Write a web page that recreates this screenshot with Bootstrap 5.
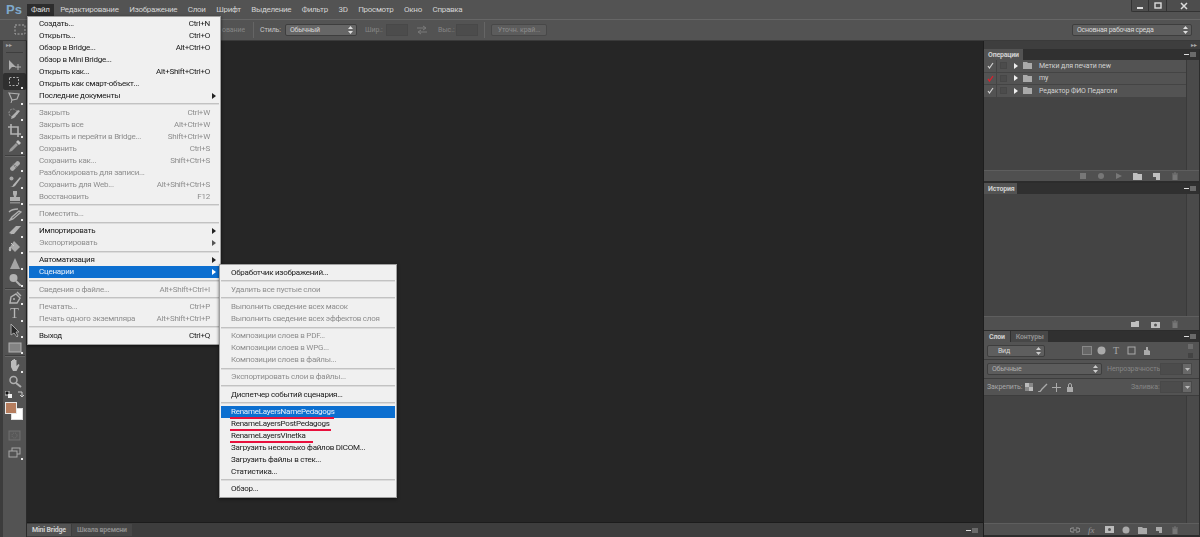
<!DOCTYPE html>
<html lang="ru">
<head>
<meta charset="utf-8">
<title>Photoshop</title>
<link href="https://cdn.jsdelivr.net/npm/bootstrap@5.3.0/dist/css/bootstrap.min.css" rel="stylesheet">
<style>
html,body{margin:0;height:537px;overflow:hidden;background:#262626}
.app{width:1200px;height:537px;font:7px/12px Roboto,"Liberation Sans",sans-serif;letter-spacing:-.1px;color:#c8c8c8;position:relative;overflow:hidden;filter:blur(.3px)}
.menubar{height:19px;background:#535353;flex:none}
.ps-logo{width:27px;padding-left:6px;font:bold 13px/19px "Liberation Sans",sans-serif;letter-spacing:0;color:#7fa9cc}
.mb-item{padding:0 4px;margin-right:2.6px;line-height:12px;height:12px;margin-top:4px;color:#d2d2d2;font-size:8px;letter-spacing:-.3px}
.mb-item.on{background:#2c2c2c;color:#ddd}
.winbtns{height:12px;width:69px;border:1px solid #333;border-top:0;border-right:0;border-radius:0 0 0 2px;background:#4d4d4d}
.winbtns span{border-right:1px solid #333;height:11px}
.optbar{height:22px;background:#535353;border-top:1px solid #666;border-bottom:1px solid #3a3a3a;flex:none;color:#c6c6c6;padding-left:14px}
.dim{color:#858585}
.vsep{width:1px;height:16px;background:#3d3d3d;border-right:1px solid #656565;flex:none}
.sel{height:12px;background:#666;border:1px solid #3e3e3e;border-radius:2px;color:#d8d8d8;padding:0 3px 0 4px;line-height:10px;letter-spacing:-.25px;flex:none}
.inp{width:22px;height:12px;background:#4c4c4c;border:1px solid #484848;flex:none}
.refine{width:56px;height:12px;background:#5c5c5c;border:1px solid #484848;border-radius:2px;line-height:10px;color:#8c8c8c;text-align:center;flex:none}
.tools{width:27px;flex:none;background:#535353;border-left:3px solid #3c3c3c;border-right:1px solid #2a2a2a;padding-top:0}
.tools-top{height:16px;width:23px;flex:none;color:#aaa;font-size:6px;line-height:8px;padding-left:3px}
.tools-top i{display:block;width:17px;height:1px;background:#3e3e3e;margin-top:3px}
.tool{height:16.35px;width:23px;flex:none;position:relative}
.tool svg{opacity:.82}
.tool.more::after{content:"";position:absolute;right:3px;bottom:1px;width:2px;height:2px;background:#e8e8e8}
.tool.on{background:#2f2f2f;border-radius:2px}
.tsep{height:2px;border-top:1px solid #3e3e3e;border-bottom:1px solid #666;width:20px;flex:none}
.colors{height:24px;width:23px;position:relative;flex:none}
.fgc,.bgc{position:absolute;border:1px solid #ddd}
.fgc{left:2px;top:2px;width:12px;height:12px;background:#b57d5e;z-index:1;border-color:#e8e8e8}
.bgc{left:8px;top:8px;width:12px;height:12px;background:#fff}
.center{min-width:0}
.canvas{background:#262626}
.strip{height:15px;background:#3d3d3d;border-top:1px solid #1c1c1c;padding:1px 3px 1px 0;flex:none}
.tabx{height:12px;line-height:12px;padding:0 5px;color:#8d8d8d;font-weight:bold;font-size:7px;letter-spacing:-.2px;background:#474747;margin-right:1px}
.tabx.on{background:#535353;color:#d0d0d0}
.ptab-a{height:11px;width:39px;padding:0 0 0 4px;color:#c8c8c8}
.ptab-b{height:11px;width:33px;padding:0 0 0 4px;color:#c8c8c8}
.ptab-c{height:11px;padding:0 5px}
.dock{width:217px;flex:none;background:#2c2c2c;border-left:1px solid #1e1e1e;padding:0 1px 2px 0}
.dock-top{height:8px;background:#3e3e3e;color:#aaa;font-size:6px;line-height:7px;text-align:right;padding-right:3px;margin-right:-1px;flex:none}
.ptabs{height:11px;background:#303030;flex:none;padding-right:1px}
.pbody{background:#444;min-height:0}
.pscroll{width:13px;background:#4a4a4a;border-left:1px solid #3a3a3a;flex:none}
.pfoot{height:11px;background:#505050;border-top:1px solid #5e5e5e;flex:none;padding-right:20px;gap:10px}
.pfoot.lay{height:12px;gap:8px}
.pfoot.his{height:14px;gap:11px}
.fxt{font:italic 9px/10px "Liberation Serif",serif;color:#999;width:9px;flex:none}
.act{height:12.5px;background:#535353;border-bottom:1px solid #444;color:#d2d2d2;line-height:12px;flex:none}
.act .chk{width:13px;border-right:1px solid #444;height:100%}
.act .chk svg{margin:0}
.act .bx{width:7px;height:7px;border:1px solid #474747;background:#4c4c4c;margin:0 5px 0 3px;flex:none}
.act .tri{width:0;height:0;border-left:4px solid #eee;border-top:3px solid transparent;border-bottom:3px solid transparent;margin:0 5px 0 2px;flex:none}
.act svg{margin-right:7px;flex:none}
.prow{background:#535353;border-bottom:1px solid #3d3d3d;flex:none;padding-left:3px;color:#a8a8a8}
.pmenu{width:14px;height:11px;flex:none}
.pmenu i{display:block;width:6px;height:5px;background:#6a6a6a;margin-left:1px}
.pmenu b{display:block;width:5px;height:1px;background:#ddd}
.fi{flex:none;display:block}
.sc i{display:block;width:5px;height:5px;background:#6c6c6c}
.sc i+i{background:#434343}
.tt{font:10px/10px "Liberation Serif",serif;width:10px;flex:none;text-align:center;letter-spacing:0}
.ps-menu{--bs-dropdown-padding-y:0;--bs-dropdown-border-radius:0;min-width:0;position:absolute;background:#f0f0f0;border:1px solid #a0a0a0;border-radius:0;padding:.5px 1px 2px;box-shadow:0 1px 3px rgba(0,0,0,.6);z-index:5}
.m-file{left:27px;top:16px;width:194px}
.m-scr{left:219px;top:264px;width:178px;padding-top:1.5px;z-index:6}
.ps-menu .dropdown-item{padding:0 9px 0 10px;height:12px;line-height:12px;font-size:8px;letter-spacing:-.25px;color:#181818;position:relative;background:none}
.ps-menu .dropdown-item.disabled{color:#8e8e8e}
.ps-menu .dropdown-item.active{background:#0c6fd0;color:#e8f0fa}
.ps-menu .dropdown-divider{margin:1.62px 0;height:2px;border-top:1px solid #c2c2c2;border-bottom:1px solid #dcdcdc;opacity:1;background:none}
.subtri{position:absolute;right:3px;top:3px;border-left:4px solid #222;border-top:3px solid transparent;border-bottom:3px solid transparent;width:0;height:0}
.subtri.dis{border-left-color:#555}
.active .subtri{border-left-color:#fff}
.redline{position:absolute;left:9px;bottom:-1.5px;height:2.5px;background:#e8103c;display:block}
.r1{width:104px}.r2{width:101px}.r3{width:83px}
svg{display:block}
.o1{margin-left:191px;width:27px;overflow:hidden;text-align:right;flex:none;white-space:nowrap}
.o2{margin-left:8px}
.o3{margin-left:6px;width:25px;flex:none}
.o4{width:72px}
.o5{margin-left:8px;width:21px;flex:none}
.o6{margin:0 11px 0 9px;flex:none}
.o7{width:18px;flex:none}
.o8{margin:0 6px}
.o9{width:120px;margin-right:8px;background:#5e5e5e}
.w17{width:17px}.w18{width:18px}
.l1{width:58px;background:#5e5e5e;padding-left:10px}
.l2{margin-left:37px;flex:none}
.l3{margin-left:4.5px;flex:none}
.l4{margin-left:5.5px}
.l5{margin-left:5.5px;flex:none}
.l6{margin-left:6px;flex:none}
.l7{margin-left:37.5px;flex:none}
.b1{width:115px;background:#5c5c5c;color:#b0b0b0}
.b2{margin-left:5px;width:53px;flex:none;white-space:nowrap}
.arrowb{width:10px;background:#686868}
.k1{width:38px;flex:none}
.k2{margin-left:5px;flex:none}
.k3{margin-left:3.5px;flex:none}
.k4{margin-left:5.5px;flex:none}
.k5{margin-left:57px;width:29px;flex:none}
.mt3{margin-top:3px}
.sw{width:19px;height:9px;margin-top:1px;flex:none}
.tsvc{font:14px/14px "Liberation Serif",serif;color:#b8b8b8;letter-spacing:0}
.h13{height:127px;flex:none}
.h110{height:110px;flex:none}
.mt-2p{margin-top:2px}
.mt-1p{margin-top:1px}
.h-18{height:18px}.h-19{height:19px}.h-17{height:17px}
</style>
</head>
<body>
<div class="app d-flex flex-column">
  <div class="menubar d-flex">
    <div class="ps-logo">Ps</div>
    <div class="mb-item on">Файл</div>
    <div class="mb-item">Редактирование</div>
    <div class="mb-item">Изображение</div>
    <div class="mb-item">Слои</div>
    <div class="mb-item">Шрифт</div>
    <div class="mb-item">Выделение</div>
    <div class="mb-item">Фильтр</div>
    <div class="mb-item">3D</div>
    <div class="mb-item">Просмотр</div>
    <div class="mb-item">Окно</div>
    <div class="mb-item">Справка</div>
    <div class="winbtns ms-auto d-flex">
      <span class="d-flex align-items-center justify-content-center w17"><svg width="8" height="8"><rect x="1" y="5" width="6" height="2" fill="#ddd"/></svg></span>
      <span class="d-flex align-items-center justify-content-center w18"><svg width="8" height="8"><rect x="1" y="1" width="6" height="5" fill="none" stroke="#ddd" stroke-width="1.4"/></svg></span>
      <span class="d-flex align-items-center justify-content-center flex-grow-1 border-0"><svg width="8" height="8"><path d="M1 1l6 6M7 1l-6 6" stroke="#ddd" stroke-width="1.5"/></svg></span>
    </div>
  </div>

  <div class="optbar d-flex align-items-center">
    <svg width="13" height="12" class="fi"><rect x="1" y="1" width="10" height="9" fill="none" stroke="#aaa" stroke-dasharray="2 1.5"/></svg>
    <span class="dim o1">ование</span>
    <div class="vsep o2"></div>
    <span class="o3">Стиль:</span>
    <div class="sel o4 d-flex justify-content-between align-items-center"><span>Обычный</span><svg width="5" height="8"><path d="M2.5 0L5 3H0zM2.5 8L5 5H0z" fill="#ddd"/></svg></div>
    <span class="dim o5">Шир.:</span>
    <div class="inp"></div>
    <svg width="10" height="10" class="o6"><path d="M0 3h8M6 1l3 2-3 2M10 7H2M4 5L1 7l3 2" fill="none" stroke="#7b7b7b"/></svg>
    <span class="dim o7">Выс.:</span>
    <div class="inp"></div>
    <div class="vsep o8"></div>
    <div class="refine">Уточн. край...</div>
    <div class="sel o9 d-flex justify-content-between align-items-center ms-auto"><span>Основная рабочая среда</span><svg width="5" height="8"><path d="M2.5 0L5 3H0zM2.5 8L5 5H0z" fill="#ddd"/></svg></div>
  </div>

  <div class="d-flex flex-grow-1 overflow-hidden">
    <div class="tools d-flex flex-column align-items-center position-relative">
      <div class="tools-top">▸▸<i></i></div>
      <div class="tool d-flex align-items-center justify-content-center"><svg width="15" height="13"><path d="M2 1v10l3-3 4 0z" fill="#c4c4c4"/><path d="M11 5v6M8 8h6" stroke="#c4c4c4"/></svg></div>
      <div class="tool more on d-flex align-items-center justify-content-center"><svg width="13" height="13"><rect x="1.5" y="2.5" width="9" height="8" fill="none" stroke="#c8c8c8" stroke-dasharray="2 1.5"/></svg></div>
      <div class="tool more d-flex align-items-center justify-content-center"><svg width="13" height="13"><path d="M1 2l10 1-2 5-5 1z" fill="none" stroke="#c4c4c4" stroke-width="1.2"/><path d="M4 9l-1 3" stroke="#c4c4c4"/></svg></div>
      <div class="tool more d-flex align-items-center justify-content-center"><svg width="13" height="13"><circle cx="5" cy="5" r="4" fill="none" stroke="#aaa" stroke-dasharray="2 1"/><path d="M3 11l3-1 6-7-2-1-6 6z" fill="#c8c8c8"/></svg></div>
      <div class="tool more d-flex align-items-center justify-content-center"><svg width="13" height="13"><path d="M3 0v10h10M0 3h10v10" fill="none" stroke="#c8c8c8" stroke-width="1.6"/></svg></div>
      <div class="tool more d-flex align-items-center justify-content-center"><svg width="13" height="13"><path d="M1 12l1-3 6-6 2 2-6 6z" fill="#aaa"/><path d="M8 2l2-2 3 3-2 2z" fill="#ddd"/></svg></div>
      <div class="tsep"></div>
      <div class="tool more d-flex align-items-center justify-content-center"><svg width="14" height="13"><path d="M2 9l7-7a3 3 0 0 1 3 3l-7 7a3 3 0 0 1-3-3z" fill="#c0c0c0"/><path d="M5 5l4 4" stroke="#777" stroke-width="2" stroke-dasharray="1 1"/></svg></div>
      <div class="tool more d-flex align-items-center justify-content-center"><svg width="14" height="13"><circle cx="3.5" cy="3.5" r="2" fill="#bbb"/><path d="M2 12c2 0 3-1 3-2l7-8 1 1-6 8c-1 1-3 1-5 1z" fill="#ccc"/></svg></div>
      <div class="tool more d-flex align-items-center justify-content-center"><svg width="14" height="13"><path d="M5 0h4v3L8 6h4v4H2V6h4L5 3z" fill="#c4c4c4"/><rect x="2" y="11" width="10" height="1.5" fill="#999"/></svg></div>
      <div class="tool more d-flex align-items-center justify-content-center"><svg width="14" height="13"><path d="M1 4c3-3 6-3 9-3M2 12l3-1 8-7-2-1-7 6z" fill="none" stroke="#c4c4c4" stroke-width="1.4"/></svg></div>
      <div class="tool more d-flex align-items-center justify-content-center"><svg width="14" height="13"><path d="M1 9l7-7h5l-7 8H2z" fill="#c8c8c8"/><path d="M1 9l3 2" stroke="#666"/></svg></div>
      <div class="tool more d-flex align-items-center justify-content-center"><svg width="14" height="13"><path d="M6 1l6 6-5 5-5-5z" fill="#bbb"/><path d="M2 7c-1 2-1 4 0 4s1-2 0-4M3 3l3 3" stroke="#ddd" fill="#ddd"/></svg></div>
      <div class="tool more d-flex align-items-center justify-content-center"><svg width="14" height="13"><path d="M7 1l5 11H2z" fill="#b8b8b8"/></svg></div>
      <div class="tool more d-flex align-items-center justify-content-center"><svg width="14" height="13"><circle cx="5.5" cy="5" r="4" fill="#c8c8c8"/><path d="M8 8l5 5" stroke="#c8c8c8" stroke-width="2"/></svg></div>
      <div class="tsep"></div>
      <div class="tool more d-flex align-items-center justify-content-center"><svg width="14" height="13"><path d="M2 12l1-6 5-3 4 4-3 5zM9 1l4 4" fill="none" stroke="#c8c8c8" stroke-width="1.4"/><circle cx="6" cy="8" r="1" fill="#c8c8c8"/></svg></div>
      <div class="tool more tsvc d-flex align-items-center justify-content-center">T</div>
      <div class="tool more d-flex align-items-center justify-content-center"><svg width="14" height="13"><path d="M3 0v11l3-2 3 4 1-1-2-4h3z" fill="#222" stroke="#bbb"/></svg></div>
      <div class="tool more d-flex align-items-center justify-content-center"><svg width="14" height="13"><rect x="1" y="2" width="12" height="9" fill="#8e8e8e" stroke="#c8c8c8"/></svg></div>
      <div class="tsep"></div>
      <div class="tool more d-flex align-items-center justify-content-center"><svg width="14" height="14"><path d="M3 8V3h1v4-5h1.5v5V1H7v6V2h1.5v6l2-2 1 1-3 6H5L3 9z" fill="#d4d4d4"/></svg></div>
      <div class="tool d-flex align-items-center justify-content-center"><svg width="14" height="13"><circle cx="5.5" cy="5" r="3.5" fill="none" stroke="#c4c4c4" stroke-width="1.5"/><path d="M8 8l5 4" stroke="#c4c4c4" stroke-width="2"/></svg></div>
      <div class="sw d-flex justify-content-between"><svg width="7" height="7"><rect x="0" y="0" width="4" height="4" fill="#111" stroke="#ccc"/><rect x="3" y="3" width="4" height="4" fill="#eee"/></svg><svg width="7" height="7"><path d="M1 1h4v5M3 4l2 2 2-2" fill="none" stroke="#ccc"/></svg></div>
      <div class="colors"><span class="bgc"></span><span class="fgc"></span></div>
      <div class="tool mt3 d-flex align-items-center justify-content-center"><svg width="13" height="11"><rect x="1" y="1" width="11" height="9" fill="#5a5a5a" stroke="#777"/><circle cx="6.5" cy="5.500" r="2.500" fill="none" stroke="#777" stroke-dasharray="1 1"/></svg></div>
      <div class="tool more mt-1p d-flex align-items-center justify-content-center"><svg width="13" height="11"><rect x="4" y="1" width="8" height="6" fill="none" stroke="#bbb"/><rect x="1" y="4" width="8" height="6" fill="#535353" stroke="#bbb"/></svg></div>
    </div>

    <div class="center flex-grow-1 d-flex flex-column">
      <div class="canvas flex-grow-1"></div>
      <div class="strip d-flex align-items-center">
        <div class="tabx on">Mini Bridge</div>
        <div class="tabx">Шкала времени</div>
        <div class="pmenu ms-auto d-flex align-items-center"><b></b><i></i></div>
      </div>
    </div>

    <div class="dock d-flex flex-column">
      <div class="dock-top">▸▸</div>

      <div class="ptabs d-flex">
        <div class="tabx on ptab-a">Операции</div>
        <div class="pmenu ms-auto d-flex align-items-center"><b></b><i></i></div>
      </div>
      <div class="pbody h110 d-flex">
        <div class="flex-grow-1 d-flex flex-column">
          <div class="act d-flex align-items-center"><span class="chk d-flex align-items-center justify-content-center"><svg width="7" height="7"><path d="M1 4l1.500 2L6 1" fill="none" stroke="#d0d0d0" stroke-width="1.200"/></svg></span><span class="bx"></span><span class="tri"></span><svg width="9" height="7"><path d="M0 0h4l1 1h4v6H0z" fill="#aaa"/></svg><span>Метки для печати new</span></div>
          <div class="act d-flex align-items-center"><span class="chk d-flex align-items-center justify-content-center"><svg width="7" height="7"><path d="M1 4l1.500 2L6 1" fill="none" stroke="#dc1f2c" stroke-width="1.300"/></svg></span><span class="bx"></span><span class="tri"></span><svg width="9" height="7"><path d="M0 0h4l1 1h4v6H0z" fill="#aaa"/></svg><span>my</span></div>
          <div class="act d-flex align-items-center"><span class="chk d-flex align-items-center justify-content-center"><svg width="7" height="7"><path d="M1 4l1.500 2L6 1" fill="none" stroke="#d0d0d0" stroke-width="1.200"/></svg></span><span class="bx"></span><span class="tri"></span><svg width="9" height="7"><path d="M0 0h4l1 1h4v6H0z" fill="#aaa"/></svg><span>Редактор ФИО Педагоги</span></div>
        </div>
        <div class="pscroll"></div>
      </div>
      <div class="pfoot d-flex align-items-center justify-content-end">
        <svg width="8" height="8" class="fi"><rect x="1" y="1" width="6" height="6" fill="#777"/></svg>
        <svg width="8" height="8" class="fi"><circle cx="4" cy="4" r="3" fill="#777"/></svg>
        <svg width="8" height="8" class="fi"><path d="M1 1l6 3-6 3z" fill="#777"/></svg>
        <svg width="9" height="8" class="fi"><path d="M0 1h4l1 1h4v6H0z" fill="#c0c0c0"/></svg>
        <svg width="9" height="8" class="fi"><path d="M1 1h7v7H4V5H1z" fill="#c0c0c0"/></svg>
        <svg width="8" height="8" class="fi"><path d="M1 2h6M3 1h2M2 3h4v5H2z" fill="#777" stroke="#777"/></svg>
      </div>

      <div class="ptabs mt-2p d-flex">
        <div class="tabx on ptab-b">История</div>
        <div class="pmenu ms-auto d-flex align-items-center"><b></b><i></i></div>
      </div>
      <div class="pbody d-flex flex-grow-1">
        <div class="flex-grow-1"></div>
        <div class="pscroll"></div>
      </div>

      <div class="pfoot his d-flex align-items-center justify-content-end">
        <svg width="9" height="8" class="fi"><path d="M0 2h4l1-1h3v6H0z" fill="#c0c0c0"/></svg>
        <svg width="9" height="8" class="fi"><rect x="0" y="2" width="9" height="6" fill="#c0c0c0"/><circle cx="4.500" cy="5" r="1.500" fill="#555"/></svg>
        <svg width="8" height="8" class="fi"><path d="M1 2h6M3 1h2M2 3h4v5H2z" fill="#777" stroke="#777"/></svg>
      </div>

      <div class="ptabs mt-1p d-flex">
        <div class="tabx on ptab-c">Слои</div>
        <div class="tabx ptab-c">Контуры</div>
        <div class="pmenu ms-auto d-flex align-items-center"><b></b><i></i></div>
      </div>
      <div class="prow d-flex align-items-center h-18">
        <div class="sel l1 d-flex justify-content-between align-items-center"><span>Вид</span><svg width="5" height="8"><path d="M2.500 0L5 3H0zM2.500 8L5 5H0z" fill="#ccc"/></svg></div>
        <svg width="10" height="9" class="l2"><rect x=".5" y=".5" width="9" height="8" fill="#666" stroke="#888"/></svg>
        <svg width="9" height="9" class="l3"><circle cx="4.500" cy="4.500" r="4" fill="#aaa"/></svg>
        <span class="tt l4">T</span>
        <svg width="9" height="9" class="l5"><rect x="1" y="1" width="7" height="7" fill="none" stroke="#aaa"/></svg>
        <svg width="9" height="9" class="l6"><path d="M2 9V4h2V1h2v3l2 1v4z" fill="#aaa"/></svg>
        <span class="sc l7 d-flex flex-column gap-1"><i></i><i></i></span>
      </div>
      <div class="prow d-flex align-items-center h-19">
        <div class="sel b1 d-flex justify-content-between align-items-center"><span>Обычные</span><svg width="5" height="8"><path d="M2.500 0L5 3H0zM2.500 8L5 5H0z" fill="#ccc"/></svg></div>
        <span class="dim b2">Непрозрачность:</span>
        <div class="inp"></div><div class="inp arrowb d-flex align-items-center justify-content-center"><svg width="5" height="3"><path d="M0 0h5L2.500 3z" fill="#bbb"/></svg></div>
      </div>
      <div class="prow d-flex align-items-center h-17">
        <span class="k1">Закрепить:</span>
        <svg width="8" height="8" class="fi"><rect width="8" height="8" fill="#888"/><path d="M0 0h4v4H0zM4 4h4v4H4z" fill="#bbb"/></svg>
        <svg width="10" height="9" class="k2"><path d="M0 9c3 0 3-2 4-3l5-5" fill="none" stroke="#aaa" stroke-width="1.400"/></svg>
        <svg width="9" height="9" class="k3"><path d="M4.500 0v9M0 4.500h9" stroke="#aaa"/></svg>
        <svg width="8" height="9" class="k4"><rect x="1" y="4" width="6" height="5" fill="#aaa"/><path d="M2.500 4V2a1.500 1.500 0 0 1 3 0v2" fill="none" stroke="#aaa"/></svg>
        <span class="dim k5">Заливка:</span>
        <div class="inp"></div><div class="inp arrowb d-flex align-items-center justify-content-center"><svg width="5" height="3"><path d="M0 0h5L2.500 3z" fill="#bbb"/></svg></div>
      </div>
      <div class="pbody h13 d-flex">
        <div class="flex-grow-1"></div>
        <div class="pscroll"></div>
      </div>
      <div class="pfoot lay d-flex align-items-center justify-content-end">
        <svg width="10" height="8" class="fi"><path d="M4 2H2a2 2 0 0 0 0 4h2M6 2h2a2 2 0 0 1 0 4H6M3 4h4" fill="none" stroke="#999"/></svg>
        <span class="fxt">fx</span>
        <svg width="9" height="7" class="fi"><rect width="9" height="7" fill="#bbb"/><circle cx="4.500" cy="3.500" r="1.500" fill="#555"/></svg>
        <svg width="8" height="8" class="fi"><circle cx="4" cy="4" r="3.500" fill="#aaa"/></svg>
        <svg width="9" height="8" class="fi"><path d="M0 1h4l1 1h4v6H0z" fill="#aaa"/></svg>
        <svg width="8" height="8" class="fi"><path d="M1 1h6v6H4V5H1z" fill="#aaa"/></svg>
        <svg width="8" height="8" class="fi"><path d="M1 2h6M3 1h2M2 3h4v5H2z" fill="#777" stroke="#777"/></svg>
      </div>
    </div>
  </div>

  <div class="dropdown-menu show ps-menu m-file">
    <a class="dropdown-item d-flex justify-content-between">Создать...<span>Ctrl+N</span></a>
    <a class="dropdown-item d-flex justify-content-between">Открыть...<span>Ctrl+O</span></a>
    <a class="dropdown-item d-flex justify-content-between">Обзор в Bridge...<span>Alt+Ctrl+O</span></a>
    <a class="dropdown-item">Обзор в Mini Bridge...</a>
    <a class="dropdown-item d-flex justify-content-between">Открыть как...<span>Alt+Shift+Ctrl+O</span></a>
    <a class="dropdown-item">Открыть как смарт-объект...</a>
    <a class="dropdown-item">Последние документы<span class="subtri"></span></a>
    <div class="dropdown-divider"></div>
    <a class="dropdown-item disabled d-flex justify-content-between">Закрыть<span>Ctrl+W</span></a>
    <a class="dropdown-item disabled d-flex justify-content-between">Закрыть все<span>Alt+Ctrl+W</span></a>
    <a class="dropdown-item disabled d-flex justify-content-between">Закрыть и перейти в Bridge...<span>Shift+Ctrl+W</span></a>
    <a class="dropdown-item disabled d-flex justify-content-between">Сохранить<span>Ctrl+S</span></a>
    <a class="dropdown-item disabled d-flex justify-content-between">Сохранить как...<span>Shift+Ctrl+S</span></a>
    <a class="dropdown-item disabled">Разблокировать для записи...</a>
    <a class="dropdown-item disabled d-flex justify-content-between">Сохранить для Web...<span>Alt+Shift+Ctrl+S</span></a>
    <a class="dropdown-item disabled d-flex justify-content-between">Восстановить<span>F12</span></a>
    <div class="dropdown-divider"></div>
    <a class="dropdown-item disabled">Поместить...</a>
    <div class="dropdown-divider"></div>
    <a class="dropdown-item">Импортировать<span class="subtri"></span></a>
    <a class="dropdown-item disabled">Экспортировать<span class="subtri dis"></span></a>
    <div class="dropdown-divider"></div>
    <a class="dropdown-item">Автоматизация<span class="subtri"></span></a>
    <a class="dropdown-item active">Сценарии<span class="subtri"></span></a>
    <div class="dropdown-divider"></div>
    <a class="dropdown-item disabled d-flex justify-content-between">Сведения о файле...<span>Alt+Shift+Ctrl+I</span></a>
    <div class="dropdown-divider"></div>
    <a class="dropdown-item disabled d-flex justify-content-between">Печатать...<span>Ctrl+P</span></a>
    <a class="dropdown-item disabled d-flex justify-content-between">Печать одного экземпляра<span>Alt+Shift+Ctrl+P</span></a>
    <div class="dropdown-divider"></div>
    <a class="dropdown-item d-flex justify-content-between">Выход<span>Ctrl+Q</span></a>
  </div>

  <div class="dropdown-menu show ps-menu m-scr">
    <a class="dropdown-item">Обработчик изображений...</a>
    <div class="dropdown-divider"></div>
    <a class="dropdown-item disabled">Удалить все пустые слои</a>
    <div class="dropdown-divider"></div>
    <a class="dropdown-item disabled">Выполнить сведение всех масок</a>
    <a class="dropdown-item disabled">Выполнить сведение всех эффектов слоя</a>
    <div class="dropdown-divider"></div>
    <a class="dropdown-item disabled">Композиции слоев в PDF...</a>
    <a class="dropdown-item disabled">Композиции слоев в WPG...</a>
    <a class="dropdown-item disabled">Композиции слоев в файлы...</a>
    <div class="dropdown-divider"></div>
    <a class="dropdown-item disabled">Экспортировать слои в файлы...</a>
    <div class="dropdown-divider"></div>
    <a class="dropdown-item">Диспетчер событий сценария...</a>
    <div class="dropdown-divider"></div>
    <a class="dropdown-item active">RenameLayersNamePedagogs<span class="redline r1"></span></a>
    <a class="dropdown-item">RenameLayersPostPedagogs<span class="redline r2"></span></a>
    <a class="dropdown-item">RenameLayersVinetka<span class="redline r3"></span></a>
    <a class="dropdown-item">Загрузить несколько файлов DICOM...</a>
    <a class="dropdown-item">Загрузить файлы в стек...</a>
    <a class="dropdown-item">Статистика...</a>
    <div class="dropdown-divider"></div>
    <a class="dropdown-item">Обзор...</a>
  </div>
</div>
<script src="https://cdn.jsdelivr.net/npm/bootstrap@5.3.0/dist/js/bootstrap.bundle.min.js"></script>
</body>
</html>
